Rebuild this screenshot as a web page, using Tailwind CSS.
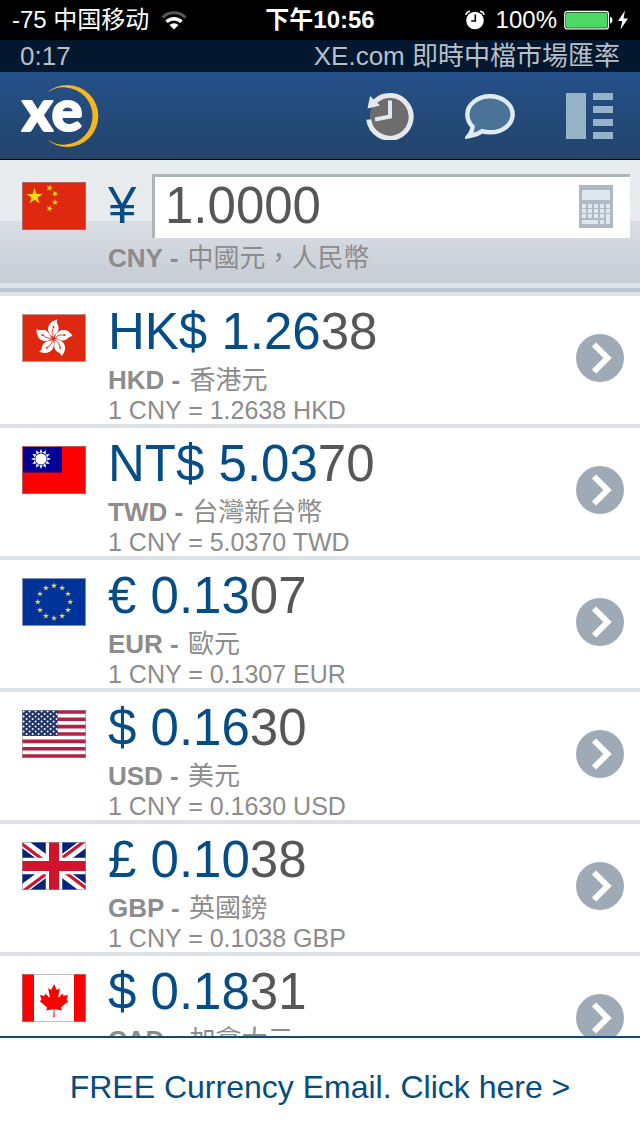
<!DOCTYPE html>
<html lang="zh-Hant">
<head>
<meta charset="utf-8">
<meta name="viewport" content="width=device-width, initial-scale=1">
<title>XE Currency</title>
<script src="https://cdn.jsdelivr.net/npm/@tailwindcss/browser@4"></script>
</head>
<body class="flex h-screen flex-col overflow-hidden bg-white font-['Liberation_Sans','Noto_Sans_CJK_TC',sans-serif] text-[#8c8c8c]">

<svg class="absolute size-0" aria-hidden="true">
  <defs>
    <path id="star" d="M0 -1L.2245 -.309H.951L.363 .118L.588 .809L0 .382L-.588 .809L-.363 .118L-.951 -.309H-.2245Z"/>
    <g id="petal">
      <path fill="#fff" d="M0 -1.500C-8 -5 -7.500 -17 4 -19C1.500 -15 7 -13 4.500 -7.500C3.500 -5 1 -4 0 -1.500Z"/>
      <path fill="none" stroke="#de2910" stroke-width=".8" d="M0 -2C-2 -5 -1.500 -8 0 -11"/>
      <circle cx="0" cy="-11.500" r="1" fill="#de2910"/>
    </g>
    <path id="ray" fill="#fff" d="M-1.600 -6.200L0 -10L1.600 -6.200Z"/>
    <path id="chevron" fill="none" stroke="#fff" stroke-width="6" d="M18 10.500L31.500 24L18 37.500"/>
    <pattern id="usStars" width="6" height="5" patternUnits="userSpaceOnUse">
      <circle cx="1.600" cy="1.400" r="1" fill="#fff"/>
      <circle cx="4.600" cy="3.900" r="1" fill="#fff"/>
    </pattern>
    <clipPath id="ukTris"><path d="M32 24H64V48ZM32 24V48H0ZM32 24H0V0ZM32 24V0H64Z"/></clipPath>
  </defs>
</svg>

<div class="grid h-10 shrink-0 grid-cols-[1fr_auto_1fr] items-center bg-black px-3 text-[24px] leading-10 text-white">
  <div class="flex items-center gap-3">
    <span class="font-['Liberation_Sans','Noto_Sans_CJK_SC',sans-serif]" lang="zh-Hans">-75 中国移动</span>
    <svg class="h-[19px] w-[26px]" viewBox="0 0 26 19" fill="none" role="img" aria-label="Wi-Fi">
      <path d="M1.500 6.500A16.500 16.500 0 0 1 24.500 6.500" stroke="#555" stroke-width="3"/>
      <path d="M5.500 10.800A10.800 10.800 0 0 1 20.500 10.800" stroke="#fff" stroke-width="3.400"/>
      <path d="M13 18.500L8.500 14A6.400 6.400 0 0 1 17.500 14Z" fill="#fff"/>
    </svg>
  </div>
  <span class="font-bold">下午10:56</span>
  <div class="flex items-center justify-end">
    <svg class="mr-[11px] h-5 w-5" viewBox="0 0 20 20" role="img" aria-label="Alarm">
      <circle cx="10" cy="10.500" r="8.800" fill="#fff"/>
      <path d="M.8 4.800A5 5 0 0 1 5 1.200M19.200 4.800A5 5 0 0 0 15 1.200" stroke="#fff" stroke-width="1.600" fill="none"/>
      <path d="M10.300 4.500V11H6.200" stroke="#000" stroke-width="1.600" fill="none"/>
    </svg>
    <span class="mr-[7px]">100%</span>
    <svg class="mr-1 h-5 w-[50px]" viewBox="0 0 50 20" role="img" aria-label="Battery full">
      <rect x=".8" y="1.300" width="43.600" height="17.600" rx="2.500" fill="none" stroke="#fff" stroke-width="1.300"/>
      <rect x="2" y="2.500" width="41.200" height="15.200" rx="1.500" fill="#4cd964"/>
      <path d="M46 7C49.300 7 49.300 13.500 46 13.500Z" fill="#fff"/>
    </svg>
    <svg class="h-5 w-[10px]" viewBox="0 0 10 20" role="img" aria-label="Charging"><path d="M7 .5L0 11H4.200L2.500 19.500L10 8.500H5.500Z" fill="#fff"/></svg>
  </div>
</div>

<div class="flex h-8 shrink-0 items-center justify-between bg-[#03182f] px-5 text-[26px] leading-8 text-[#b9bfc8]">
  <span>0:17</span>
  <span>XE.com 即時中檔市場匯率</span>
</div>

<header class="flex h-[88px] shrink-0 items-center justify-between border-b border-black bg-linear-to-b from-[#24508a] to-[#23446b] pr-[26px] pl-[22px]">
  <a href="#" aria-label="xe">
    <svg class="h-16 w-[77px] overflow-visible" viewBox="22 84 77 64">
      <path fill="#f7b520" d="M46 93.500A31 31 0 1 1 46 138.500A28.700 28.700 0 1 0 46 93.500Z"/>
      <text x="22" y="131" font-family="Lato" font-weight="900" font-size="58" fill="#fff" stroke="#fff" stroke-width="2" stroke-linejoin="round">xe</text>
    </svg>
  </a>
  <nav class="flex items-center gap-[51px]">
    <button type="button" aria-label="History">
      <svg class="h-12 w-12" viewBox="366 92 48 48">
        <circle cx="390" cy="115.500" r="20" fill="#6e6d6e"/>
        <path d="M374.500 102A21.300 21.300 0 1 1 368.700 119.500" fill="none" stroke="#e6e8ea" stroke-width="5"/>
        <path d="M370 96L367.500 108.500L380 105.500Z" fill="#e6e8ea"/>
        <path d="M390 100.500V116.500L375 119.500" fill="none" stroke="#dfe9ef" stroke-width="4"/>
      </svg>
    </button>
    <button type="button" aria-label="Feedback">
      <svg class="h-12 w-[50px]" viewBox="465 92 50 48">
        <path d="M490 96.300C502.500 96.300 512.700 104.500 512.700 114.500C512.700 124.500 502.500 132.300 490 132.300C487 132.300 484.500 131.900 482 131.200C478 134 473.500 135.500 468.500 136.200C471 133 472.500 129.500 472.500 126.500C469.300 123.300 467.300 119 467.300 114.500C467.300 104.500 477.500 96.300 490 96.300Z" fill="#4b7397" stroke="#e0eaf2" stroke-width="4.400"/>
      </svg>
    </button>
    <button type="button" aria-label="News">
      <svg class="h-12 w-12" viewBox="566 92 48 48" fill="#97b3c9">
        <path d="M566 93H586V139H566ZM593 93H613V100H593ZM593 106H613V113H593ZM593 119H613V126H593ZM593 132H613V139H593Z"/>
      </svg>
    </button>
  </nav>
</header>

<section class="shrink-0">
  <div class="flex items-start bg-[linear-gradient(#e7ebee_0px,#e8ebef_61px,#dadde4_61px,#c7ccd5_123px)] pr-[10px] pb-[9px] pl-[22px]">
    <svg class="mt-[22px] mr-[22px] h-12 w-16 shrink-0" viewBox="0 0 64 48" role="img" aria-label="China">
      <rect x=".5" y=".5" width="63" height="47" fill="#de2910" stroke="#b0655f"/>
      <g fill="#ffde00">
        <use href="#star" transform="translate(12.500 14.500) scale(8.400)"/>
        <use href="#star" transform="translate(27.500 6) rotate(20) scale(3.400)"/>
        <use href="#star" transform="translate(33 11.700) rotate(40) scale(3.200)"/>
        <use href="#star" transform="translate(33 20.500) scale(3.200)"/>
        <use href="#star" transform="translate(27.500 26.500) rotate(20) scale(3.400)"/>
      </g>
    </svg>
    <div class="min-w-0 flex-1 pt-[14px]">
      <div class="flex">
        <label for="amount" class="w-11 text-[51px] leading-[64px] text-[#064c85]">¥</label>
        <div class="relative flex-1">
          <input id="amount" type="text" inputmode="decimal" value="1.0000" class="h-16 w-full border-t-[3px] border-l-[3px] border-[#adb5b8] bg-white pr-16 pb-[3px] pl-[10px] text-[51px] text-[#575757] outline-none">
          <button type="button" aria-label="Calculator" class="absolute top-[11px] right-[17px]">
            <svg class="h-[43px] w-[34px]" viewBox="0 0 34 43">
              <rect width="34" height="43" fill="#aeb9c3"/>
              <path fill="#dfe7ee" d="M3 5H31V15H3ZM3 19H7V23H3ZM9 19H13V23H9ZM15 19H19V23H15ZM21 19H25V23H21ZM27 19H31V23H27ZM3 24H7V28H3ZM9 24H13V28H9ZM15 24H19V28H15ZM21 24H25V28H21ZM27 24H31V28H27ZM3 29H7V33H3ZM9 29H13V33H9ZM15 29H19V33H15ZM21 29H25V33H21ZM3 35H19V39H3ZM21 35H25V39H21ZM27 29H31V39H27Z"/>
            </svg>
          </button>
        </div>
      </div>
      <p class="mt-1 text-[26px] leading-8"><b class="mr-[2px]">CNY - </b>中國元，人民幣</p>
    </div>
  </div>
  <div class="border-t-[5px] border-[#dfe2e8]"></div>
  <div class="border-t-4 border-[#bbc5cf]"></div>
  <div class="border-t-4 border-[#dee2e7]"></div>
</section>

<main class="min-h-0 flex-1 overflow-hidden">
  <ul>
    <li class="flex items-start border-b-4 border-[#dde2e6] pr-4 pl-[22px]">
      <svg class="mt-[18px] mr-[22px] h-12 w-16 shrink-0" viewBox="0 0 64 48" role="img" aria-label="Hong Kong">
        <rect x=".5" y=".5" width="63" height="47" fill="#de2910" stroke="#c98d87"/>
        <g transform="translate(31.500 24.500)">
          <use href="#petal"/><use href="#petal" transform="rotate(72)"/><use href="#petal" transform="rotate(144)"/><use href="#petal" transform="rotate(216)"/><use href="#petal" transform="rotate(288)"/>
        </g>
      </svg>
      <div class="min-w-0 flex-1 pt-[10px]">
        <p class="text-[51px] leading-[52px] text-[#575757]"><span class="text-[#064c85]">HK$ 1.26</span>38</p>
        <p class="mt-[6px] text-[26px] leading-8"><b class="mr-[2px]">HKD - </b>香港元</p>
        <p class="text-[25px] leading-7">1 CNY = 1.2638 HKD</p>
      </div>
      <button type="button" aria-label="HKD details" class="mt-[38px] size-12 rounded-full bg-[#9eabb6]"><svg viewBox="0 0 48 48"><use href="#chevron"/></svg></button>
    </li>
    <li class="flex items-start border-b-4 border-[#dde2e6] pr-4 pl-[22px]">
      <svg class="mt-[18px] mr-[22px] h-12 w-16 shrink-0" viewBox="0 0 64 48" role="img" aria-label="Taiwan">
        <rect x=".5" y=".5" width="63" height="47" fill="#fe0000" stroke="#b8595c"/>
        <rect x="1" y="1" width="39" height="25.500" fill="#000095"/>
        <g transform="translate(19 13)">
          <circle r="5.600" fill="#fff"/>
          <use href="#ray"/><use href="#ray" transform="rotate(30)"/><use href="#ray" transform="rotate(60)"/><use href="#ray" transform="rotate(90)"/><use href="#ray" transform="rotate(120)"/><use href="#ray" transform="rotate(150)"/><use href="#ray" transform="rotate(180)"/><use href="#ray" transform="rotate(210)"/><use href="#ray" transform="rotate(240)"/><use href="#ray" transform="rotate(270)"/><use href="#ray" transform="rotate(300)"/><use href="#ray" transform="rotate(330)"/>
        </g>
      </svg>
      <div class="min-w-0 flex-1 pt-[10px]">
        <p class="text-[51px] leading-[52px] text-[#575757]"><span class="text-[#064c85]">NT$ 5.03</span>70</p>
        <p class="mt-[6px] text-[26px] leading-8"><b class="mr-[2px]">TWD - </b>台灣新台幣</p>
        <p class="text-[25px] leading-7">1 CNY = 5.0370 TWD</p>
      </div>
      <button type="button" aria-label="TWD details" class="mt-[38px] size-12 rounded-full bg-[#9eabb6]"><svg viewBox="0 0 48 48"><use href="#chevron"/></svg></button>
    </li>
    <li class="flex items-start border-b-4 border-[#dde2e6] pr-4 pl-[22px]">
      <svg class="mt-[18px] mr-[22px] h-12 w-16 shrink-0" viewBox="0 0 64 48" role="img" aria-label="European Union">
        <rect x=".5" y=".5" width="63" height="47" fill="#039" stroke="#8090b5"/>
        <g fill="#efd258" transform="translate(32 24)">
          <use href="#star" transform="translate(0 -16.200) scale(3.200)"/>
          <use href="#star" transform="translate(8.100 -14) scale(3.200)"/>
          <use href="#star" transform="translate(14 -8.100) scale(3.200)"/>
          <use href="#star" transform="translate(16.200 0) scale(3.200)"/>
          <use href="#star" transform="translate(14 8.100) scale(3.200)"/>
          <use href="#star" transform="translate(8.100 14) scale(3.200)"/>
          <use href="#star" transform="translate(0 16.200) scale(3.200)"/>
          <use href="#star" transform="translate(-8.100 14) scale(3.200)"/>
          <use href="#star" transform="translate(-14 8.100) scale(3.200)"/>
          <use href="#star" transform="translate(-16.200 0) scale(3.200)"/>
          <use href="#star" transform="translate(-14 -8.100) scale(3.200)"/>
          <use href="#star" transform="translate(-8.100 -14) scale(3.200)"/>
        </g>
      </svg>
      <div class="min-w-0 flex-1 pt-[10px]">
        <p class="text-[51px] leading-[52px] text-[#575757]"><span class="text-[#064c85]">€ 0.13</span>07</p>
        <p class="mt-[6px] text-[26px] leading-8"><b class="mr-[2px]">EUR - </b>歐元</p>
        <p class="text-[25px] leading-7">1 CNY = 0.1307 EUR</p>
      </div>
      <button type="button" aria-label="EUR details" class="mt-[38px] size-12 rounded-full bg-[#9eabb6]"><svg viewBox="0 0 48 48"><use href="#chevron"/></svg></button>
    </li>
    <li class="flex items-start border-b-4 border-[#dde2e6] pr-4 pl-[22px]">
      <svg class="mt-[18px] mr-[22px] h-12 w-16 shrink-0" viewBox="0 0 64 48" role="img" aria-label="United States">
        <rect width="64" height="48" fill="#fff"/>
        <path stroke="#b22243" stroke-width="3.700" d="M0 1.850H64M0 9.230H64M0 16.600H64M0 24H64M0 31.400H64M0 38.770H64M0 46.150H64"/>
        <rect width="35.500" height="25.850" fill="#1f3468"/>
        <rect width="35.500" height="25.500" fill="url(#usStars)"/>
        <rect x=".5" y=".5" width="63" height="47" fill="none" stroke="#999" stroke-opacity=".6"/>
      </svg>
      <div class="min-w-0 flex-1 pt-[10px]">
        <p class="text-[51px] leading-[52px] text-[#575757]"><span class="text-[#064c85]">$ 0.16</span>30</p>
        <p class="mt-[6px] text-[26px] leading-8"><b class="mr-[2px]">USD - </b>美元</p>
        <p class="text-[25px] leading-7">1 CNY = 0.1630 USD</p>
      </div>
      <button type="button" aria-label="USD details" class="mt-[38px] size-12 rounded-full bg-[#9eabb6]"><svg viewBox="0 0 48 48"><use href="#chevron"/></svg></button>
    </li>
    <li class="flex items-start border-b-4 border-[#dde2e6] pr-4 pl-[22px]">
      <svg class="mt-[18px] mr-[22px] h-12 w-16 shrink-0" viewBox="0 0 64 48" role="img" aria-label="United Kingdom">
        <rect width="64" height="48" fill="#00247d"/>
        <path stroke="#fff" stroke-width="9.500" d="M0 0L64 48M64 0L0 48"/>
        <path clip-path="url(#ukTris)" stroke="#cf142b" stroke-width="6.400" d="M0 0L64 48M64 0L0 48"/>
        <path stroke="#fff" stroke-width="16.500" d="M32 0V48M0 24H64"/>
        <path stroke="#cf142b" stroke-width="10" d="M32 0V48M0 24H64"/>
        <rect x=".5" y=".5" width="63" height="47" fill="none" stroke="#999" stroke-opacity=".6"/>
      </svg>
      <div class="min-w-0 flex-1 pt-[10px]">
        <p class="text-[51px] leading-[52px] text-[#575757]"><span class="text-[#064c85]">£ 0.10</span>38</p>
        <p class="mt-[6px] text-[26px] leading-8"><b class="mr-[2px]">GBP - </b>英國鎊</p>
        <p class="text-[25px] leading-7">1 CNY = 0.1038 GBP</p>
      </div>
      <button type="button" aria-label="GBP details" class="mt-[38px] size-12 rounded-full bg-[#9eabb6]"><svg viewBox="0 0 48 48"><use href="#chevron"/></svg></button>
    </li>
    <li class="flex items-start border-b-4 border-[#dde2e6] pr-4 pl-[22px]">
      <svg class="mt-[18px] mr-[22px] h-12 w-16 shrink-0" viewBox="0 0 64 48" role="img" aria-label="Canada">
        <rect width="64" height="48" fill="#fff"/>
        <path fill="#f00" d="M0 0H12V48H0ZM52 0H64V48H52Z"/>
        <path fill="#f00" transform="translate(32 26.500) scale(.0078 .0082)" d="M-90,2030l45-863a95,95 0 0,0 -111-98l-859,151 116-320a65,65 0 0,0 -20-73l-941-762 212-99a65,65 0 0,0 34-79l-186-572 542,115a65,65 0 0,0 73-38l105-247 423,454a65,65 0 0,0 111-57l-204-1052 327,189a65,65 0 0,0 91-27l332-652 332,652a65,65 0 0,0 91,27l327-189-204,1052a65,65 0 0,0 111,57l423-454 105,247a65,65 0 0,0 73,38l542-115-186,572a65,65 0 0,0 34,79l212,99-941,762a65,65 0 0,0 -20,73l116,320-859-151a95,95 0 0,0 -111,98l45,863z"/>
        <rect x=".5" y=".5" width="63" height="47" fill="none" stroke="#999" stroke-opacity=".6"/>
      </svg>
      <div class="min-w-0 flex-1 pt-[10px]">
        <p class="text-[51px] leading-[52px] text-[#575757]"><span class="text-[#064c85]">$ 0.18</span>31</p>
        <p class="mt-[6px] text-[26px] leading-8"><b class="mr-[2px]">CAD - </b>加拿大元</p>
        <p class="text-[25px] leading-7">1 CNY = 0.1831 CAD</p>
      </div>
      <button type="button" aria-label="CAD details" class="mt-[38px] size-12 rounded-full bg-[#9eabb6]"><svg viewBox="0 0 48 48"><use href="#chevron"/></svg></button>
    </li>
  </ul>
</main>

<a href="#" class="flex h-[100px] shrink-0 items-center justify-center border-t-2 border-[#0c4f73] bg-white text-[32px] text-[#064c7d]">FREE Currency Email. Click here &gt;</a>

</body>
</html>
